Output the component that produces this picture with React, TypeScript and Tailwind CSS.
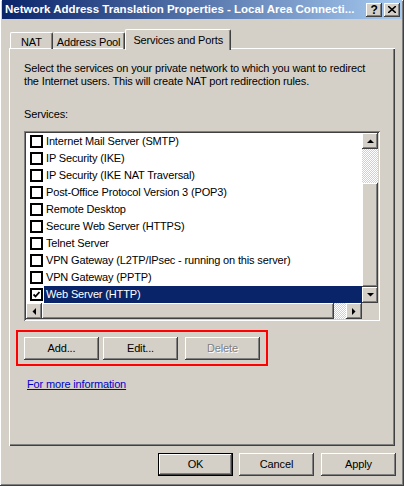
import React from "react";

const raised =
  "shadow-[inset_-1px_-1px_#404040,inset_1px_1px_#ffffff,inset_-2px_-2px_#808080,inset_2px_2px_#d4d0c8]";
const sunken =
  "shadow-[inset_1px_1px_#808080,inset_-1px_-1px_#ffffff,inset_2px_2px_#404040,inset_-2px_-2px_#d4d0c8]";
const checker =
  "bg-[repeating-conic-gradient(#ffffff_0_25%,#d4d0c8_0_50%)] bg-[length:2px_2px]";

const services = [
  { name: "Internet Mail Server (SMTP)", on: false },
  { name: "IP Security (IKE)", on: false },
  { name: "IP Security (IKE NAT Traversal)", on: false },
  { name: "Post-Office Protocol Version 3 (POP3)", on: false },
  { name: "Remote Desktop", on: false },
  { name: "Secure Web Server (HTTPS)", on: false },
  { name: "Telnet Server", on: false },
  { name: "VPN Gateway (L2TP/IPsec - running on this server)", on: false },
  { name: "VPN Gateway (PPTP)", on: false },
  { name: "Web Server (HTTP)", on: true },
];

function Arrow({ dir }: { dir: "up" | "down" | "left" | "right" }) {
  const pts = {
    up: "0,4 7,4 3.5,0.5",
    down: "0,0 7,0 3.5,3.5",
    left: "4,0 4,7 0.5,3.5",
    right: "0,0 0,7 3.5,3.5",
  }[dir];
  const vertical = dir === "up" || dir === "down";
  return (
    <svg width={vertical ? 7 : 4} height={vertical ? 4 : 7} viewBox={vertical ? "0 0 7 4" : "0 0 4 7"}>
      <polygon points={pts} fill="#000" />
    </svg>
  );
}

function ScrollBtn({ dir }: { dir: "up" | "down" | "left" | "right" }) {
  return (
    <div className={`w-[16px] h-[16px] shrink-0 bg-[#d4d0c8] flex items-center justify-center ${raised}`}>
      <Arrow dir={dir} />
    </div>
  );
}

function Button({ label, w = 75, disabled, def }: { label: string; w?: number; disabled?: boolean; def?: boolean }) {
  return (
    <div
      style={{ width: w }}
      className={`h-[23px] shrink-0 bg-[#d4d0c8] flex items-center justify-center ${
        def
          ? "shadow-[inset_0_0_0_1px_#000000,inset_-2px_-2px_#404040,inset_2px_2px_#ffffff,inset_-3px_-3px_#808080]"
          : raised
      }`}
    >
      <span className={disabled ? "text-[#808080] [text-shadow:1px_1px_0_#ffffff]" : "text-black"}>
        {label}
      </span>
    </div>
  );
}

function CaptionBtn({ children }: { children: React.ReactNode }) {
  return (
    <div className={`w-[16px] h-[14px] bg-[#d4d0c8] flex items-center justify-center font-bold text-[12px] leading-none text-black ${raised}`}>
      {children}
    </div>
  );
}

export default function App() {
  return (
    <div
      className={`w-[404px] h-[486px] bg-[#d4d0c8] text-[11px] leading-[13px] tracking-[-0.15px] text-black overflow-hidden flex flex-col select-none ${raised}`}
      style={{ fontFamily: '"Liberation Sans", Arial, sans-serif' }}
    >
      {/* title bar */}
      <div className="mx-[2px] h-[19px] shrink-0 flex items-center bg-[linear-gradient(to_right,#0a246a,#a6caf0)] pl-[3px] pr-[2px]">
        <span className="text-white font-bold text-[11.5px] tracking-normal flex-1 whitespace-nowrap">
          Network Address Translation Properties - Local Area Connecti...
        </span>
        <div className="flex items-center">
          <CaptionBtn>?</CaptionBtn>
          <div className="w-[2px]" />
          <CaptionBtn>
            <svg width="8" height="7" viewBox="0 0 8 7">
              <path d="M0 0 L8 7 M8 0 L0 7" stroke="#000" strokeWidth="1.6" />
            </svg>
          </CaptionBtn>
        </div>
      </div>

      {/* tabs */}
      <div className="mt-[9px] ml-[9px] h-[21px] flex items-end relative z-10">
        <div className="ml-[1px] h-[17px] px-[10px] flex items-center border-t border-l border-white border-r border-r-[#404040] rounded-t-[2px] shadow-[inset_-1px_0_#808080]">
          <span className="mt-[3px]">NAT</span>
        </div>
        <div className="h-[17px] px-[4px] flex items-center border-t border-white border-r border-r-[#404040] rounded-t-[2px] shadow-[inset_-1px_0_#808080]">
          <span className="mt-[3px]">Address Pool</span>
        </div>
        <div className="h-[21px] px-[7px] -mb-[1px] pb-[1px] flex items-center bg-[#d4d0c8] border-t border-l border-white border-r border-r-[#404040] rounded-t-[2px] shadow-[inset_-1px_0_#808080]">
          <span className="mt-[1px]">Services and Ports</span>
        </div>
      </div>

      {/* tab panel */}
      <div className="ml-[9px] w-[386px] h-[398px] -mt-[1px] flex flex-col shadow-[inset_1px_1px_#ffffff,inset_-1px_-1px_#404040,inset_-2px_-2px_#808080]">
        <p className="mt-[14px] ml-[15px] whitespace-nowrap">
          Select the services on your private network to which you want to redirect
          <br />
          the Internet users. This will create NAT port redirection rules.
        </p>
        <p className="mt-[20px] ml-[15px]">Services:</p>

        {/* list box */}
        <div className={`mt-[10px] ml-[15px] w-[356px] h-[190px] bg-white p-[2px] ${sunken}`}>
          <div className="flex h-[170px]">
            <div className="flex-1 flex flex-col">
              {services.map((s) => (
                <div key={s.name} className="h-[17px] flex items-center">
                  <div className="ml-[4px] w-[13px] h-[13px] border-2 border-black bg-white flex items-center justify-center shrink-0">
                    {s.on && (
                      <svg width="7" height="7" viewBox="0 0 7 7">
                        <path d="M0.5 3.5 L2.5 5.5 L6.5 1" stroke="#000" strokeWidth="1.8" fill="none" />
                      </svg>
                    )}
                  </div>
                  <div
                    className={`ml-[1px] h-[17px] flex-1 flex items-center pl-[2px] whitespace-nowrap ${
                      s.on ? "bg-[#0a246a] text-white" : ""
                    }`}
                  >
                    {s.name}
                  </div>
                </div>
              ))}
            </div>
            <div className="w-[16px] flex flex-col">
              <ScrollBtn dir="up" />
              <div className={`h-[34px] ${checker}`} />
              <div className={`flex-1 bg-[#d4d0c8] ${raised}`} />
              <ScrollBtn dir="down" />
            </div>
          </div>
          <div className="flex h-[16px]">
            <ScrollBtn dir="left" />
            <div className={`w-[292px] bg-[#d4d0c8] ${raised}`} />
            <div className={`flex-1 ${checker}`} />
            <ScrollBtn dir="right" />
            <div className="w-[16px] bg-[#d4d0c8]" />
          </div>
        </div>

        {/* highlighted buttons */}
        <div className="mt-[9px] ml-[7px] w-[252px] h-[36px] border-2 border-[#ff0000] flex items-center pl-[6px]">
          <Button label="Add..." />
          <div className="w-[4px]" />
          <Button label="Edit..." />
          <div className="w-[7px]" />
          <Button label="Delete" disabled />
        </div>

        <div className="mt-[12px] ml-[18px]">
          <span className="text-[#0000cc] underline">For more information</span>
        </div>
      </div>

      {/* bottom buttons */}
      <div className="mt-[7px] flex ml-[158px]">
        <Button label="OK" def />
        <div className="w-[6px]" />
        <Button label="Cancel" />
        <div className="w-[7px]" />
        <Button label="Apply" />
      </div>
    </div>
  );
}
